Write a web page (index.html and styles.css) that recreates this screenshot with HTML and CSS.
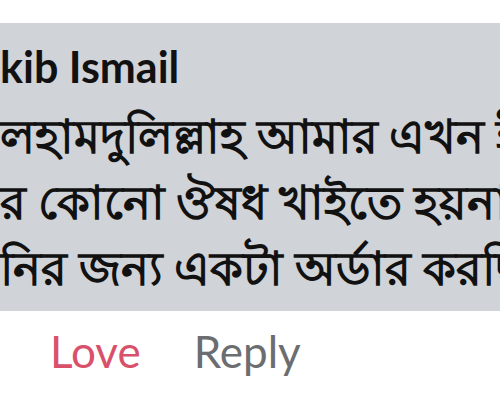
FILE: index.html
```html
<!DOCTYPE html>
<html lang="bn">
<head>
  <meta charset="UTF-8">
  <meta name="viewport" content="width=device-width, initial-scale=1.0">
  <title>Comment</title>
  <link rel="stylesheet" href="styles.css">
</head>
<body>
  <div class="comment">
    <div class="bubble">
      <div class="name">kib Ismail</div>
      <div class="text">
        <p class="line">লহামদুলিল্লাহ আমার এখন ই</p>
        <p class="line">র কোনো ঔষধ খাইতে হয়না</p>
        <p class="line">নির জন্য একটা অর্ডার করছি</p>
      </div>
    </div>
    <div class="actions">
      <span class="love">Love</span>
      <span class="reply">Reply</span>
    </div>
  </div>
</body>
</html>
```

FILE: styles.css
```css
html, body {
  margin: 0;
  background: #fff;
  overflow: hidden;
}
body {
  width: 500px;
  height: 400px;
  font-family: Lato, "Noto Sans", sans-serif;
}
.comment {
  padding-top: 23px;
}
.bubble {
  background: #d0d3d8;
  height: 288px;
  overflow: hidden;
  white-space: nowrap;
  color: #111;
}
.name {
  font-size: 43px;
  font-weight: 700;
  line-height: 54px;
  padding-top: 17px;
}
.text {
  margin-top: 8px;
  font-size: 47px;
  font-weight: 600;
}
.line {
  margin: 0;
  line-height: 66px;
}
.actions {
  display: flex;
  gap: 53px;
  padding-left: 50px;
  font-size: 44px;
  line-height: 80px;
}
.love {
  color: #d9506b;
}
.reply {
  color: #6b6d70;
}
```
